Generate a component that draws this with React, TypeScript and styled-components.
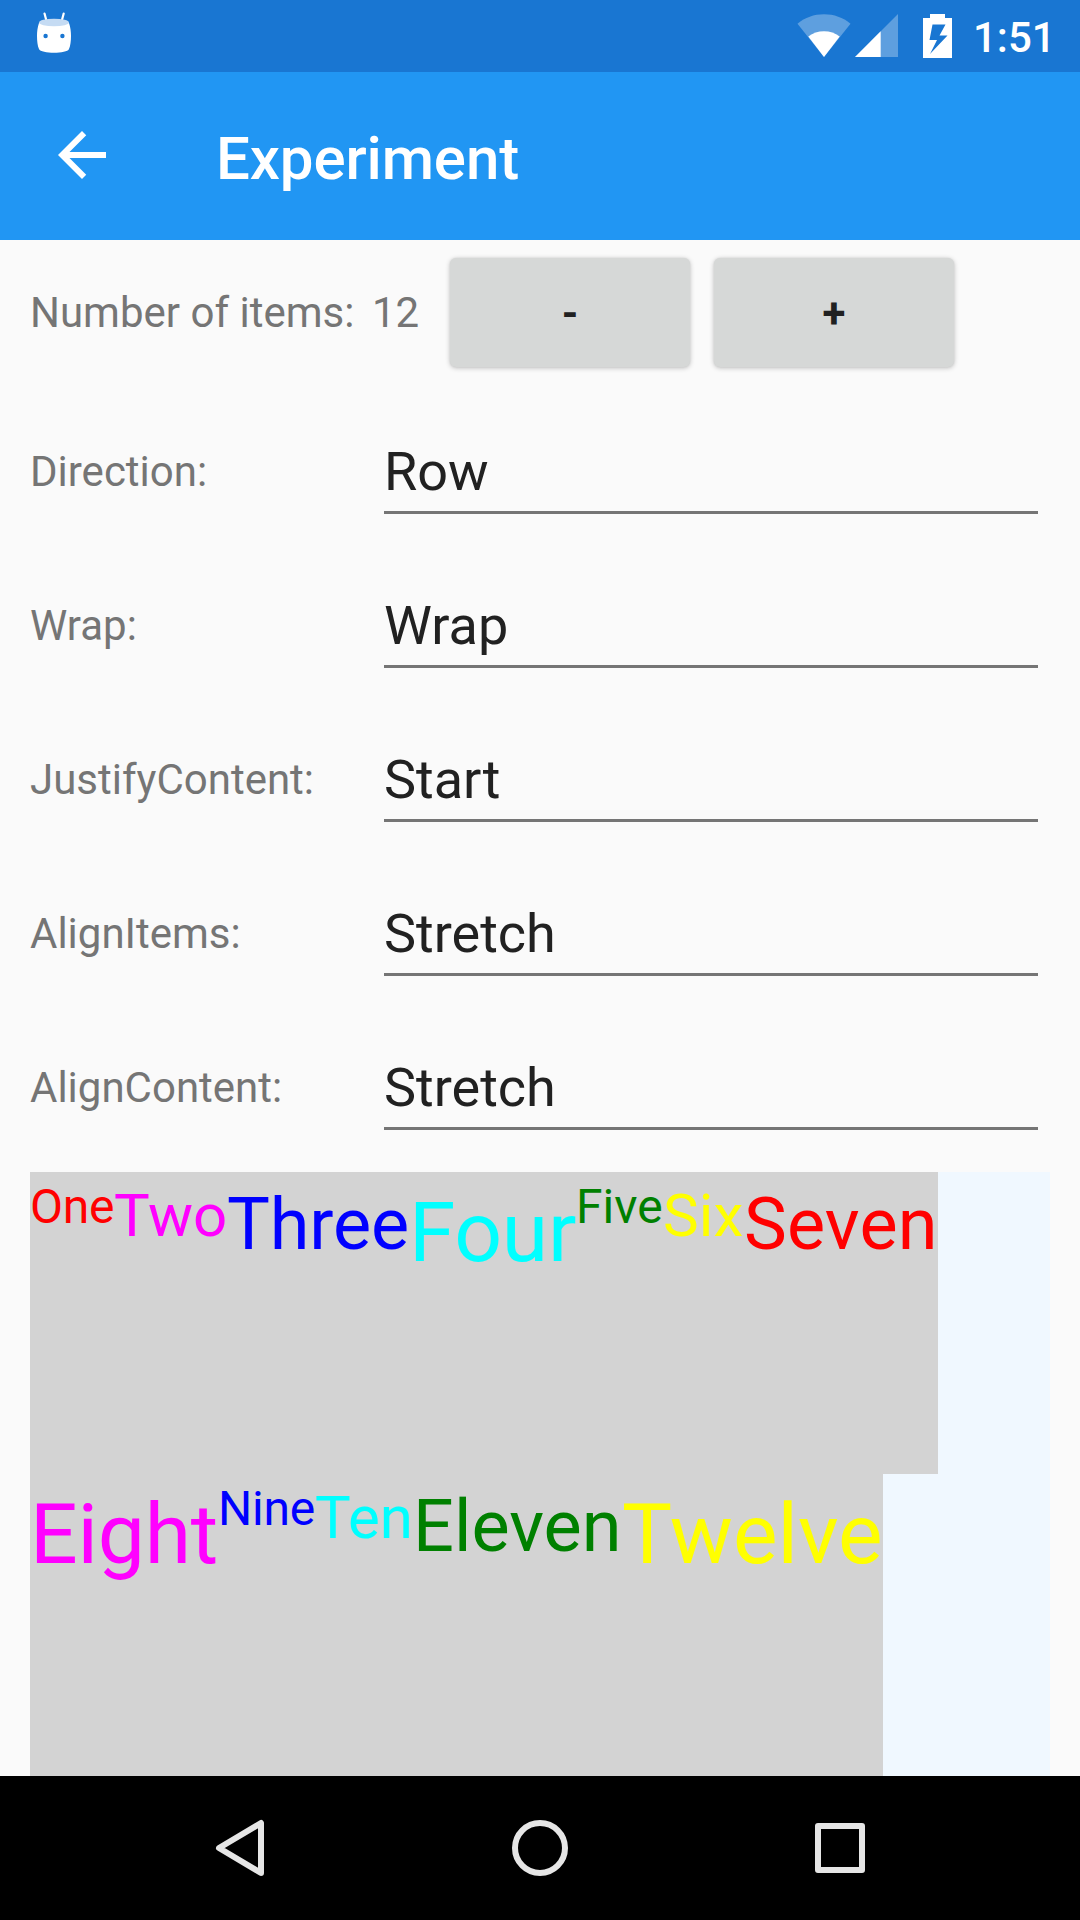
import React, { useState } from "react";
import styled, { createGlobalStyle } from "styled-components";

const GlobalStyle = createGlobalStyle`
  *, *::before, *::after { box-sizing: border-box; }
  body { margin: 0; background: #fafafa; }
`;

const Screen = styled.div`
  display: flex;
  flex-direction: column;
  width: 1080px;
  height: 1920px;
  overflow: hidden;
  background: #fafafa;
  font-family: Roboto, "Liberation Sans", sans-serif;
`;

const StatusBar = styled.header`
  flex: none;
  display: flex;
  align-items: center;
  height: 72px;
  padding: 0 24px 0 30px;
  background: #1976d2;
  color: #fff;
`;

const StatusIcons = styled.div`
  display: flex;
  align-items: center;
  margin-left: auto;
`;

const Clock = styled.span`
  width: 83px;
  margin-left: 21px;
  padding-top: 3px;
  font-size: 42px;
  line-height: 50px;
  font-weight: 500;
  white-space: nowrap;
`;

const AppBar = styled.div`
  flex: none;
  display: flex;
  align-items: center;
  height: 168px;
  padding: 0 46px;
  background: #2196f3;
  color: #fff;
`;

const BackButton = styled.button`
  display: flex;
  width: 72px;
  height: 72px;
  margin: -2px 98px 0 0;
  padding: 0;
  border: 0;
  background: none;
  color: inherit;
`;

const Title = styled.h1`
  margin: 6px 0 0;
  font-size: 60px;
  line-height: 70px;
  font-weight: 500;
  letter-spacing: -0.12px;
`;

const Content = styled.main`
  flex: 1;
  display: flex;
  flex-direction: column;
  padding: 0 30px;
  min-height: 0;
`;

const Stepper = styled.div`
  flex: none;
  display: grid;
  grid-template-columns: 342px 78px 240px 240px;
  column-gap: 0;
  align-items: center;
  height: 144px;
  margin-bottom: 11px;
`;

const Label = styled.span`
  font-size: 42px;
  line-height: 50px;
  color: #757575;
`;

const StepperLabel = styled(Label)`
  padding-top: 2px;
`;

const StepButton = styled.button`
  width: 240px;
  height: 109px;
  padding: 3px 0 0;
  border: 0;
  border-radius: 6px;
  background: #d6d8d7;
  color: #212121;
  font-family: inherit;
  font-size: 42px;
  line-height: 50px;
  font-weight: 700;
  box-shadow: 0 1px 5px rgba(0, 0, 0, 0.24), 0 0 2px rgba(0, 0, 0, 0.08);

  & + & {
    margin-left: 24px;
  }
`;

const PickerRow = styled.label`
  flex: none;
  display: grid;
  grid-template-columns: 354px 654px;
  align-items: center;
  height: 154px;
`;

const PickerValue = styled.span`
  display: flex;
  align-items: center;
  height: 84px;
  padding-top: 2px;
  border-bottom: 3px solid #757575;
  font-size: 54px;
  line-height: 64px;
  color: #212121;
`;

const FlexDemo = styled.section`
  flex: 1;
  display: flex;
  flex-wrap: wrap;
  align-items: stretch;
  align-content: stretch;
  margin-top: 7px;
  background: #f0f8ff;
`;

const Item = styled.span<{ $size: number; $top: number; $color: string; $width: number; $tracking: number }>`
  width: ${(p) => p.$width}px;
  padding-top: ${(p) => p.$top}px;
  background: #d3d3d3;
  color: ${(p) => p.$color};
  font-size: ${(p) => p.$size}px;
  line-height: normal;
  letter-spacing: ${(p) => p.$tracking}px;
  white-space: nowrap;
`;

const NavBar = styled.nav`
  flex: none;
  display: flex;
  align-items: center;
  justify-content: center;
  gap: 228px;
  height: 144px;
  background: #000;
`;

const fields: [string, string][] = [
  ["Direction:", "Row"],
  ["Wrap:", "Wrap"],
  ["JustifyContent:", "Start"],
  ["AlignItems:", "Stretch"],
  ["AlignContent:", "Stretch"],
];

// name, measured width, letter spacing
const items: [string, number, number][] = [
  ["One", 84, -0.3],
  ["Two", 113, -0.15],
  ["Three", 182, -0.15],
  ["Four", 167, -0.3],
  ["Five", 87, 0],
  ["Six", 81, 0.2],
  ["Seven", 194, 0.2],
  ["Eight", 188, -0.2],
  ["Nine", 97, -0.2],
  ["Ten", 98, 0],
  ["Eleven", 209, 0],
  ["Twelve", 261, 0],
];
const colors = ["#ff0000", "#ff00ff", "#0000ff", "#00ffff", "#008000", "#ffff00"];
const textSizes = [
  { size: 48, top: 6 },
  { size: 60, top: 8 },
  { size: 72, top: 10 },
  { size: 84, top: 11 },
];

const DroidIcon = () => (
  <svg width="54" height="54" viewBox="30 9 54 54">
    <path d="M44.500 13.500l2 7.500M63.700 13.500l-2 7.500" stroke="#fff" strokeWidth="2.200" strokeLinecap="round" />
    <path d="M39 23c-1.500 4-2 9-2 13 0 5 .6 10 2 13 2 5 28 5 30 0 1.400-3 2-8 2-13 0-4-.5-9-2-13z" fill="#fff" />
    <ellipse cx="54" cy="22.500" rx="15" ry="3.800" fill="#c5dbf3" />
    <circle cx="45.600" cy="36" r="2.200" fill="#1976d2" />
    <circle cx="62.400" cy="36" r="2.200" fill="#1976d2" />
  </svg>
);

const WifiIcon = () => (
  <svg width="54" height="44" viewBox="0 0 54 44">
    <path d="M27 43L.5 9.700C8 3.500 17 .3 27 .3s19 3.200 26.500 9.400z" fill="#fff" opacity=".3" />
    <path d="M27 43L11.300 22.500C16 19 21 17.200 27 17.200S38 19 42.700 22.500z" fill="#fff" />
  </svg>
);

const SignalIcon = () => (
  <svg width="43" height="44" viewBox="0 0 43 44" style={{ marginLeft: 4 }}>
    <path d="M0 43L43 0v43z" fill="#fff" opacity=".3" />
    <path d="M0 43L25.700 17.300V43z" fill="#fff" />
  </svg>
);

const BatteryIcon = () => (
  <svg width="29" height="44" viewBox="0 0 29 44" style={{ marginLeft: 25 }}>
    <path
      fillRule="evenodd"
      d="M7 0h15v4h7v40H0V4h7zM9.500 10.500L6.500 26h7.500L7 40 24.500 21.500h-8l6-11z"
      fill="#fff"
    />
  </svg>
);

export default function App() {
  const [count, setCount] = useState(12);
  return (
    <Screen>
      <GlobalStyle />
      <StatusBar>
        <DroidIcon />
        <StatusIcons>
          <WifiIcon />
          <SignalIcon />
          <BatteryIcon />
          <Clock>1:51</Clock>
        </StatusIcons>
      </StatusBar>
      <AppBar>
        <BackButton aria-label="Back">
          <svg width="72" height="72" viewBox="0 0 24 24" fill="currentColor">
            <path d="M20 11H7.830l5.590-5.590L12 4l-8 8 8 8 1.410-1.410L7.830 13H20v-2z" />
          </svg>
        </BackButton>
        <Title>Experiment</Title>
      </AppBar>
      <Content>
        <Stepper>
          <StepperLabel>Number of items:</StepperLabel>
          <StepperLabel>{count}</StepperLabel>
          <StepButton onClick={() => setCount(Math.max(1, count - 1))}>-</StepButton>
          <StepButton onClick={() => setCount(Math.min(12, count + 1))}>+</StepButton>
        </Stepper>
        {fields.map(([label, value]) => (
          <PickerRow key={label}>
            <Label>{label}</Label>
            <PickerValue>{value}</PickerValue>
          </PickerRow>
        ))}
        <FlexDemo>
          {items.slice(0, count).map(([name, width, tracking], i) => (
            <Item
              key={name}
              $size={textSizes[i % 4].size}
              $top={textSizes[i % 4].top}
              $color={colors[i % 6]}
              $width={width}
              $tracking={tracking}
            >
              {name}
            </Item>
          ))}
        </FlexDemo>
      </Content>
      <NavBar>
        <svg width="72" height="72" viewBox="0 0 72 72" fill="none" stroke="#e6e6e6" strokeWidth="6" strokeLinejoin="round">
          <path d="M57 11v50L15 36z" />
        </svg>
        <svg width="72" height="72" viewBox="0 0 72 72" fill="none" stroke="#e6e6e6" strokeWidth="6">
          <circle cx="36" cy="36" r="25" />
        </svg>
        <svg width="72" height="72" viewBox="0 0 72 72" fill="none" stroke="#e6e6e6" strokeWidth="6" strokeLinejoin="round">
          <rect x="14" y="14" width="44" height="44" />
        </svg>
      </NavBar>
    </Screen>
  );
}
